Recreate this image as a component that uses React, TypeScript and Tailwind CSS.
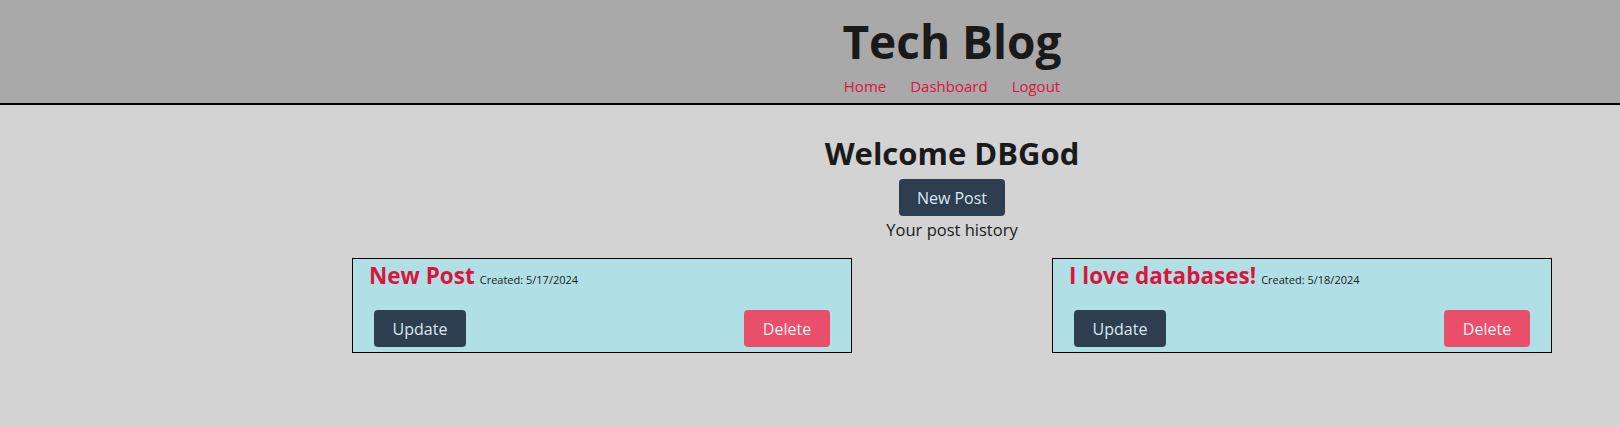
const posts = [
  { id: 1, title: 'New Post', created: '5/17/2024' },
  { id: 2, title: 'I love databases!', created: '5/18/2024' },
];

function PostCard({ title, created }: { title: string; created: string }) {
  return (
    <div className="w-[500px] h-[95px] border border-black bg-[#b0e0e6] flex flex-col">
      <div className="flex items-baseline gap-[5px] pl-[16px] pt-[1px]">
        <h3 className="text-[22.5px] font-bold text-[#dc143c] leading-[32px]">{title}</h3>
        <span className="text-[11px] text-[#1a1a1a]">Created: {created}</span>
      </div>
      <div className="flex justify-between px-[21px] mt-[18px]">
        <button className="w-[92px] h-[37px] rounded bg-[#2c3e50] text-[#dbe8f2] text-[16px]">Update</button>
        <button className="w-[86px] h-[37px] rounded bg-[#e94f6a] text-[#fbeef0] text-[16px]">Delete</button>
      </div>
    </div>
  );
}

export default function App() {
  return (
    <div className="min-h-[427px] bg-[#d3d3d3] text-[#1a1a1a]" style={{ fontFamily: '"Segoe UI", "Open Sans", sans-serif' }}>
      <header className="bg-[#a9a9a9] border-b-2 border-black h-[105px] pl-[284px]">
        <div className="flex flex-col items-center pt-[13px]">
          <h1 className="text-[46px] font-bold leading-[56px] text-[#1a1a1a]">Tech Blog</h1>
          <nav className="flex gap-[24px] text-[15px] text-[#dc143c] leading-[24px] mt-[5px]">
            <a>Home</a>
            <a>Dashboard</a>
            <a>Logout</a>
          </nav>
        </div>
      </header>
      <main className="pl-[284px]">
        <div className="flex flex-col items-center pt-[28px]">
          <h2 className="text-[31px] font-bold leading-[40px]">Welcome DBGod</h2>
          <button className="mt-[6px] w-[106px] h-[37px] rounded bg-[#2c3e50] text-[#dbe8f2] text-[16px]">New Post</button>
          <p className="text-[16.5px] leading-[26px] mt-[1px]">Your post history</p>
        </div>
        <div className="flex justify-between px-[68px] mt-[15px]">
          {posts.map(p => (
            <PostCard key={p.id} title={p.title} created={p.created} />
          ))}
        </div>
      </main>
    </div>
  );
}
